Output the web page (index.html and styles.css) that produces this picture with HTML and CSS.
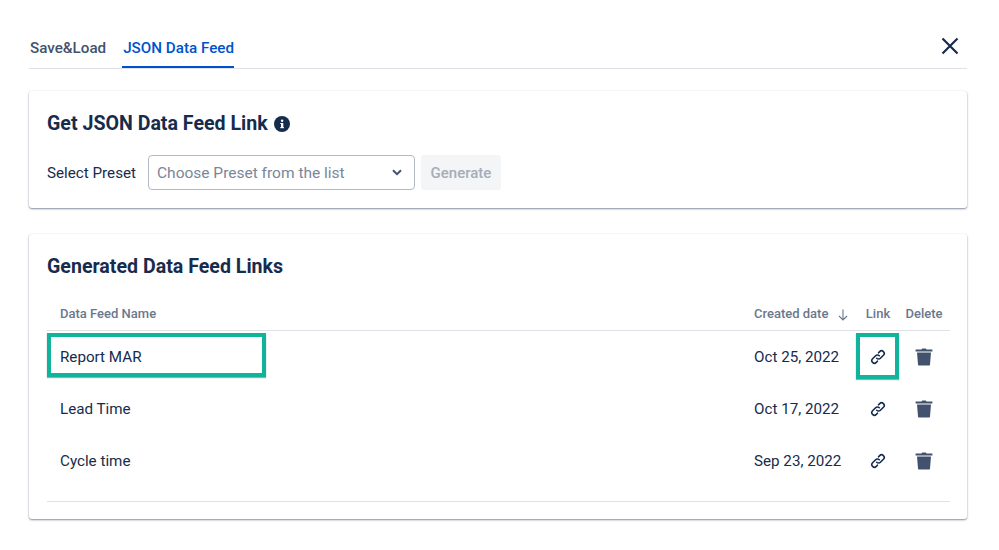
FILE: index.html
```html
<!DOCTYPE html>
<html lang="en">
<head>
    <meta charset="UTF-8">
    <meta name="viewport" content="width=device-width, initial-scale=1.0">
    <title>JSON Data Feed</title>
    <link rel="stylesheet" href="styles.css">
</head>
<body>

<div class="tabs">
    <a class="tab">Save&amp;Load</a>
    <a class="tab tab-active">JSON Data Feed</a>
    <button class="close" aria-label="Close">
        <svg width="18" height="18" viewBox="0 0 18 18"><path d="M1.5 1.5L16.5 16.5M16.5 1.5L1.5 16.5" stroke="#172b4d" stroke-width="2.2" fill="none"/></svg>
    </button>
</div>

<section class="card card-get">
    <h2 class="card-title">Get JSON Data Feed Link
        <svg class="info" width="16" height="16" viewBox="0 0 16 16"><circle cx="8" cy="8" r="8" fill="#172b4d"/><rect x="7" y="7" width="2.3" height="5" fill="#fff"/><rect x="6.2" y="7" width="2" height="1" fill="#fff"/><rect x="6.2" y="11.2" width="3.8" height="1" fill="#fff"/><circle cx="8.1" cy="4.8" r="1.25" fill="#fff"/></svg>
    </h2>
    <div class="preset">
        <label class="preset-label">Select Preset</label>
        <div class="select">
            <span>Choose Preset from the list</span>
            <svg width="10" height="7" viewBox="0 0 10 7"><path d="M1 1.2L5 5.2L9 1.2" stroke="#42526e" stroke-width="2" fill="none"/></svg>
        </div>
        <button class="btn" disabled>Generate</button>
    </div>
</section>

<section class="card card-links">
    <h2 class="card-title">Generated Data Feed Links</h2>
    <div class="table">
        <div class="row row-head">
            <span>Data Feed Name</span>
            <span class="date-head">Created date
                <svg width="10" height="12" viewBox="0 0 10 12"><path d="M5 0.5V11M1 7L5 11L9 7" stroke="#6b778c" stroke-width="1.1" fill="none"/></svg>
            </span>
            <span class="center">Link</span>
            <span class="center">Delete</span>
        </div>
        <div class="row">
            <span>Report MAR</span>
            <span>Oct 25, 2022</span>
            <span class="center"><svg class="icon"><use href="#link"/></svg></span>
            <span class="center"><svg class="icon-trash"><use href="#trash"/></svg></span>
            <div class="mark mark-name"></div>
            <div class="mark mark-link"></div>
        </div>
        <div class="row">
            <span>Lead Time</span>
            <span>Oct 17, 2022</span>
            <span class="center"><svg class="icon"><use href="#link"/></svg></span>
            <span class="center"><svg class="icon-trash"><use href="#trash"/></svg></span>
        </div>
        <div class="row">
            <span>Cycle time</span>
            <span>Sep 23, 2022</span>
            <span class="center"><svg class="icon"><use href="#link"/></svg></span>
            <span class="center"><svg class="icon-trash"><use href="#trash"/></svg></span>
        </div>
    </div>
</section>

<svg class="defs" width="0" height="0">
    <symbol id="link" viewBox="0 0 16 16">
        <path d="M6.7 9.3a2.6 2.6 0 0 0 3.7 0l3-3a2.6 2.6 0 0 0-3.7-3.7L8.6 3.8M9.3 6.7a2.6 2.6 0 0 0-3.7 0l-3 3a2.6 2.6 0 0 0 3.7 3.7l1.1-1.2" stroke="#172b4d" stroke-width="1.6" fill="none" stroke-linecap="round"/>
    </symbol>
    <symbol id="trash" viewBox="0 0 18 18">
        <path d="M6.5 1.6L7.2 0.6H10.8L11.5 1.6H17.4V3.6H0.6V1.6Z" fill="#42526e"/>
        <path d="M2 4.6H16L15 16.4C14.9 17.2 14.4 17.6 13.6 17.6H4.4C3.6 17.6 3.1 17.2 3 16.4Z" fill="#42526e"/>
    </symbol>
</svg>

</body>
</html>
```

FILE: styles.css
```css
body {
    font-family: Roboto, Arial, sans-serif;
    margin: 0;
    padding: 0 32px 31px 29px;
    background-color: #fff;
    color: #172b4d;
}

.tabs {
    display: flex;
    align-items: flex-start;
    gap: 16px;
    height: 68px;
    border-bottom: 1px solid #dfe1e6;
}

.tab {
    display: flex;
    align-items: center;
    height: 68px;
    padding: 30px 0 2px 1px;
    box-sizing: border-box;
    font-size: 15.2px;
    font-weight: 500;
    color: #42526e;
}

.tab-active {
    color: #0052cc;
    padding-bottom: 0;
    border-bottom: 2px solid #0052cc;
}

.close {
    margin-left: auto;
    margin-right: 8px;
    margin-top: 37px;
    padding: 0;
    width: 18px;
    height: 18px;
    background: none;
    border: none;
    cursor: pointer;
}

.card {
    background-color: #fff;
    border-radius: 3px;
    box-shadow: 0 1px 2px rgba(9, 30, 66, 0.5), 0 0 1px rgba(9, 30, 66, 0.08);
    padding: 21px 17px 0 18px;
    box-sizing: border-box;
}

.card-get {
    margin-top: 22px;
    height: 117px;
}

.card-links {
    margin-top: 26px;
    height: 285px;
}

.card-title {
    display: flex;
    align-items: center;
    gap: 6px;
    margin: 0;
    font-size: 19.6px;
    line-height: 24px;
    font-weight: 700;
}

.preset {
    display: flex;
    align-items: center;
    margin-top: 19px;
}

.preset-label {
    font-size: 15.2px;
    width: 101px;
}

.select {
    display: flex;
    align-items: center;
    justify-content: space-between;
    width: 267px;
    height: 35px;
    padding: 0 12px 0 8px;
    box-sizing: border-box;
    border: 1px solid #b3b9c4;
    border-radius: 4px;
    font-size: 15.5px;
    color: #7a869a;
}

.btn {
    margin-left: 6px;
    width: 80px;
    height: 35px;
    padding: 0;
    border: none;
    border-radius: 3px;
    background-color: #f4f5f7;
    color: #a5adba;
    font-family: inherit;
    font-size: 15px;
    font-weight: 500;
}

.table {
    margin-top: 18px;
    height: 204px;
    border-bottom: 1px solid #dfe1e6;
}

.row {
    position: relative;
    display: grid;
    grid-template-columns: 1fr 104px 40px 52px;
    align-items: center;
    height: 52px;
    padding-left: 13px;
    font-size: 15.2px;
}

.row-head {
    height: 33px;
    border-bottom: 1px solid #dfe1e6;
    font-size: 13px;
    font-weight: 500;
    color: #6b778c;
}

.date-head {
    display: flex;
    align-items: center;
    gap: 10px;
    white-space: nowrap;
}

.date-head svg {
    margin-top: 3px;
}

.center {
    display: flex;
    justify-content: center;
}

.icon {
    width: 16px;
    height: 16px;
}

.icon-trash {
    width: 18px;
    height: 18px;
}

.defs {
    position: absolute;
}

/* groene kaders om de rij */
.mark {
    position: absolute;
    border: 4px solid #10b39b;
    box-sizing: border-box;
    pointer-events: none;
    box-shadow: 0 1px 1px rgba(90, 80, 80, 0.5);
}

.mark-name {
    left: 0;
    top: 2px;
    width: 219px;
    height: 44px;
}

.mark-link {
    left: 809px;
    top: 2px;
    width: 43px;
    height: 46px;
}
```
